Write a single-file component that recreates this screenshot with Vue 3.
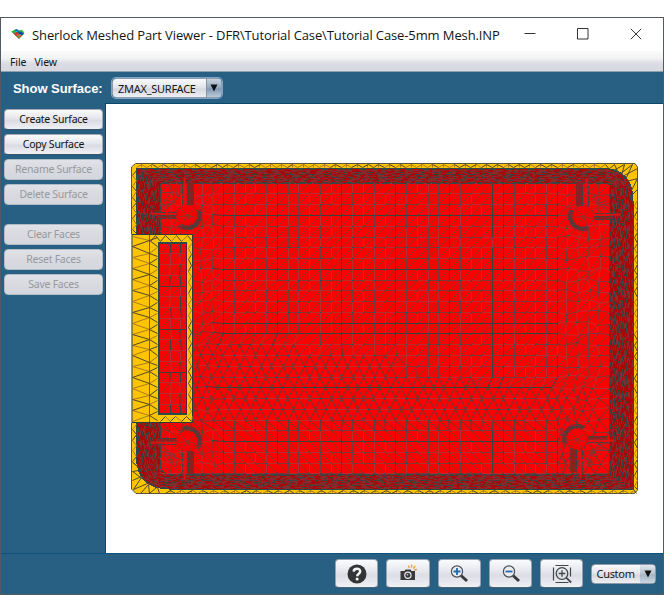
<script setup>
const surfaceActions = [
  { label: 'Create Surface', enabled: true },
  { label: 'Copy Surface', enabled: true },
  { label: 'Rename Surface', enabled: false },
  { label: 'Delete Surface', enabled: false },
]
const faceActions = ['Clear Faces', 'Reset Faces', 'Save Faces']

// Deterministic pseudo random numbers keep the mesh stable between renders.
let seed = 20117
const rnd = () => {
  seed = (seed * 16807) % 2147483647
  return seed / 2147483647
}
const jit = (a) => (rnd() - 0.5) * 2 * a
const f = (n) => n.toFixed(1)
// Line ends sit on pixel centres so that straight edges stay sharp.
const c = (n) => Math.floor(n) + 0.5
const seg = (a, b) => `M${c(a[0])} ${c(a[1])}L${c(b[0])} ${c(b[1])}`
const dot = (p) => `M${Math.floor(p[0])} ${Math.floor(p[1])}h1v1h-1z`

// ---- Floor of the case: 5 mm triangulated grid ----
const floor = { light: '', mid: '', diag: '', steep: '', dark: '', dots: '' }
const cols = [160, 170.5, 181, 191.5, 202]
for (let k = 0; k < 33; k++) cols.push(212.7 + k * 10.77)
cols.push(567, 578, 588.5, 599, 609.5)
const rowCount = 28
const rowY = (j) => 183.2 + j * 10.77
const darkRows = [3, 8, 13, 14, 19, 24]
const darkCols = [6, 11, 17, 22, 27, 31, 32, 37]

function zone(x, y) {
  if (y > 423 && x < 560) return 'C'
  const limit = x < 300 ? 342 : x < 400 ? 350 : x < 480 ? 368 : 386
  return y > limit ? 'B' : 'A'
}
const nodes = []
for (let j = 0; j < rowCount; j++) {
  nodes.push(cols.map((x, i) => {
    const y = rowY(j)
    const edge = i === 0 || i === cols.length - 1
    const loose = i < 6 || i > 37
    const z = zone(x, y)
    let nx = x
    let ny = y
    if (!edge && z === 'B' && j % 2) nx -= 5.4
    if (!edge && loose) nx += jit(1.6)
    else if (z === 'B') nx += jit(0.7)
    if (j > 0 && j < rowCount - 1 && loose) ny += jit(2.4)
    return [nx, ny]
  }))
}
for (let j = 0; j < rowCount; j++) {
  for (let i = 0; i < cols.length; i++) {
    const p = nodes[j][i]
    const z = zone(cols[i], rowY(j))
    const core = i > 4 && i < 37
    if (rnd() < 0.75) floor.dots += dot(p)
    if (i + 1 < cols.length) {
      const s = seg(p, nodes[j][i + 1])
      if (darkRows.includes(j) && core) floor.dark += s
      else if (rnd() < 0.45) floor.mid += s
      else floor.light += s
    }
    if (j + 1 < rowCount) {
      const s = seg(p, nodes[j + 1][i])
      if (z !== 'B' && darkCols.includes(i) && rnd() < 0.94) floor.dark += s
      else if (z === 'B') floor.steep += s
      else if (rnd() < 0.45) floor.mid += s
      else floor.light += s
      if ((z === 'B' && j % 2 === 0) || z === 'C') {
        if (i + 1 < cols.length) floor[z === 'B' ? 'steep' : 'diag'] += seg(p, nodes[j + 1][i + 1])
      } else if (i > 0) floor[z === 'B' ? 'steep' : 'diag'] += seg(p, nodes[j + 1][i - 1])
    }
  }
}

// ---- Side walls: dense contours between the rim and the floor ----
const mix = (a, b, t) => a + (b - a) * t
function contour(t) {
  const l = mix(136.5, 160, t), r = mix(633, 609.5, t)
  const u = mix(168, 183.3, t), b = mix(489, 474.6, t)
  const tr = mix(33, 3, t), bl = mix(33, 12, t)
  return `M${f(l)} ${f(u)}H${f(r - tr)}Q${f(r)} ${f(u)} ${f(r)} ${f(u + tr)}V${f(b)}H${f(l + bl)}Q${f(l)} ${f(b)} ${f(l)} ${f(b - bl)}Z`
}
const wallOuter = contour(0)
const floorOutline = contour(1)
const contours = []
for (let k = 0; k <= 23; k++) {
  const dash = Array.from({ length: 14 }, () => Math.round(2 + rnd() * 8)).join(' ')
  const color = ['#8a2a2a', '#7c2c2c', '#3a4242', '#8f2828'][k % 4]
  contours.push({ d: contour(k / 23), dash, color, offset: Math.round(rnd() * 30) })
}
let wallCross = ''
for (let x = 140; x < 630; x += 5) {
  for (const [a, b] of [[170, 183], [475, 488]]) {
    if ((x > 600 && a < 200) || (x < 168 && a > 400)) continue
    const y = mix(a, b - 3, rnd())
    wallCross += seg([x, y], [x + jit(5), y + 3])
  }
}
for (let y = 186; y < 474; y += 3) {
  for (const [a, b] of [[139, 158], [611, 631]]) {
    if (y > 450 && a < 200) continue
    const x = mix(a, b - 3, rnd())
    wallCross += seg([x, y], [x + 3, y + jit(5)])
  }
}

// ---- Yellow rim and connector cut-out ----
const rim = { dark: '', light: '' }
function strip(x0, y0, x1, y1, horizontal, step) {
  const start = horizontal ? x0 : y0
  const end = horizontal ? x1 : y1
  let side = 0
  for (let v = start; v < end; v += step) {
    const n = Math.min(v + step, end)
    const a = horizontal ? [v, side ? y0 : y1] : [side ? x0 : x1, v]
    const b = horizontal ? [n, side ? y1 : y0] : [side ? x1 : x0, n]
    if (rnd() < 0.5) rim.dark += seg(a, b)
    else rim.light += seg(a, b)
    side = 1 - side
  }
}
strip(136, 164, 605, 167, true, 5.4)
strip(165, 490, 636, 493, true, 5.4)
strip(132, 170, 136, 233, false, 5.4)
strip(132, 424, 136, 465, false, 5.4)
strip(634, 200, 637, 489, false, 5.4)
for (let x = 141; x < 600; x += 10.8) rim.light += seg([x, 164], [x, 167])
for (let x = 170; x < 636; x += 10.8) rim.light += seg([x, 490], [x, 492])
strip(150, 235, 192, 241, true, 5.3)
strip(160, 416, 192, 421, true, 5.3)
strip(188, 243, 191, 415, false, 5.6)
for (let k = 0; k < 17; k++) {
  const y = 236 + k * 10.9
  const m = y + 5.5 + jit(1)
  rim[k % 2 ? 'dark' : 'light'] += seg([132, y], [149, m])
  rim[k % 3 ? 'light' : 'dark'] += seg([132, y + 10.9], [149, m])
  rim.dark += seg([149, m], [157, y + 10])
  rim[k % 2 ? 'light' : 'dark'] += seg([149, m], [157, y + 1])
}
for (const [a, b] of [
  [[605, 164], [609, 169]], [[614, 164], [608, 169]], [[614, 164], [618, 173]], [[624, 164], [613, 170]],
  [[624, 164], [621, 175]], [[632, 164], [619, 174]], [[637, 168], [622, 176]], [[637, 178], [626, 181]],
  [[632, 164], [625, 179]], [[637, 178], [631, 190]], [[637, 189], [632, 194]],
  [[132, 462], [137, 466]], [[132, 471], [138, 470]], [[132, 471], [143, 479]], [[132, 480], [141, 476]],
  [[133, 489], [141, 477]], [[133, 489], [147, 483]], [[140, 493], [148, 484]], [[149, 493], [148, 484]],
  [[149, 493], [156, 487]], [[159, 493], [157, 487]],
]) rim.dark += seg(a, b)

const slot = { light: '', dark: '', diag: '' }
for (let k = 0; k < 16; k++) {
  const y = 243 + k * 10.75
  const w = 170.5 + jit(1)
  slot[k % 4 ? 'light' : 'dark'] += seg([160, y], [185, y])
  slot.diag += seg([170.5, y], [160, y + 10.7]) + seg([180.5, y], [170.5, y + 10.7])
  slot.diag += seg([185, y + 3], [180, y + 10])
  slot[k % 3 ? 'light' : 'dark'] += seg([170.5, y], [w, y + 10.7])
  slot[k % 3 === 1 ? 'light' : 'dark'] += seg([180.5, y], [180.5 + jit(1), y + 10.7])
}

// ---- Screw posts; sx and sy point to the nearest corner of the case ----
function makePost(cx, cy, sx, sy) {
  let shade = ''
  const toward = Math.atan2(-sy, -sx)
  for (let k = 0; k < 15; k++) {
    const a = toward + ((k - 7) / 7) * 1.15
    const b = a + 0.25
    shade += `M${f(cx + 11 * Math.cos(a))} ${f(cy + 11 * Math.sin(a))}L${f(cx + 15 * Math.cos(b))} ${f(cy + 15 * Math.sin(b))}`
  }
  let fan = ''
  for (let k = 0; k < 7; k++) {
    const a = (k * Math.PI * 2) / 7 + 0.3
    fan += seg([cx, cy], [cx + 9 * Math.cos(a), cy + 9 * Math.sin(a)])
    const t = Math.atan2(sy, sx) + (k - 3) * 0.22
    fan += seg([cx + sx * 13, cy + sy * 13], [cx + 29 * Math.cos(t), cy + 29 * Math.sin(t)])
  }
  // Ribs run from the post to both walls; their inner faces are in shadow.
  const ribs = [
    { x: Math.min(cx, cx - 7 * sx), y: sy < 0 ? cy - 33 : cy + 10, w: 7, h: 23 },
    { x: sx < 0 ? cx - 30 : cx + 11, y: Math.min(cy, cy - 3 * sy), w: 19, h: 3.5 },
  ]
  let ribLines = ''
  for (const o of [1, 4, 6]) ribLines += seg([cx - o * sx, cy + sy * 10], [cx - o * sx, cy + sy * 33])
  for (const o of [0, 3]) ribLines += seg([cx + sx * 11, cy - o * sy], [cx + sx * 30, cy - o * sy])
  const tops = seg([cx + 3 * sx, cy + sy * 11], [cx + 3 * sx, cy + sy * 38]) + seg([cx + sx * 11, cy + 1.5 * sy], [cx + sx * 37, cy + 1.5 * sy])
  const topEdges = seg([cx + 5 * sx, cy + sy * 11], [cx + 5 * sx, cy + sy * 35]) + seg([cx + sx * 11, cy + 3 * sy], [cx + sx * 34, cy + 3 * sy])
  const a0 = toward - 1.2
  const a1 = toward + 1.2
  const arc = `M${f(cx + 13 * Math.cos(a0))} ${f(cy + 13 * Math.sin(a0))}A13 13 0 0 1 ${f(cx + 13 * Math.cos(a1))} ${f(cy + 13 * Math.sin(a1))}`
  return { cx, cy, shade, fan, ribs, ribLines, tops, topEdges, arc }
}
const posts = [
  makePost(187, 215, -1, -1),
  makePost(583, 216, 1, -1),
  makePost(187, 441, -1, 1),
  makePost(577, 439, 1, 1),
]
</script>

<template>
  <div class="page">
    <div class="window">
      <header class="titlebar">
        <svg class="app-icon" width="16" height="13" viewBox="0 0 16 13">
          <path d="M1 4l5-3 9 5-6 6z" fill="#238547" />
          <path d="M1 4l4-2 2 2-3 2z" fill="#15c51c" />
          <path d="M6 1l4 2-2 2-3-2z" fill="#1464ce" />
          <path d="M9 3l3-1 3 3-3 1z" fill="#20ba37" />
          <path d="M3 5l3-1 3 3-3 2z" fill="#dd3424" />
          <path d="M8 5l3-1 3 2-3 2z" fill="#133cbb" />
          <path d="M6 8l3-2 3 2-3 3z" fill="#e05b20" />
          <path d="M4 5l4-2M8 9l3-2" stroke="#21bfc7" />
        </svg>
        <h1 class="title">Sherlock Meshed Part Viewer - DFR\Tutorial Case\Tutorial Case-5mm Mesh.INP</h1>
        <div class="controls">
          <svg width="12" height="12" viewBox="0 0 12 12"><path d="M.5 5.5h11" /></svg>
          <svg width="12" height="12" viewBox="0 0 12 12"><path d="M.5 .5h10.5v10.5H.5z" /></svg>
          <svg width="12" height="12" viewBox="0 0 12 12"><path d="M.8 .8l10.4 10.4M11.2 .8L.8 11.2" /></svg>
        </div>
      </header>

      <nav class="menu"><span>File</span><span>View</span></nav>

      <div class="surface-bar">
        <span class="surface-label">Show Surface:</span>
        <div class="combo focused">
          <span class="combo-text">ZMAX_SURFACE</span>
          <span class="combo-arrow"><svg width="8" height="8" viewBox="0 0 8 8"><path d="M.5 .5h7L4 7.5z" /></svg></span>
        </div>
      </div>

      <div class="body">
        <aside class="sidebar">
          <div class="group">
            <button v-for="a in surfaceActions" :key="a.label" class="action" :disabled="!a.enabled">{{ a.label }}</button>
          </div>
          <div class="group">
            <button v-for="a in faceActions" :key="a" class="action" disabled>{{ a }}</button>
          </div>
        </aside>

        <main class="canvas">
          <svg class="mesh" width="510" height="334" viewBox="130 162 510 334">
            <path class="rim" d="M135.500 163.500H635L637.500 167V490L634.500 493.500H136L131.500 489V167Z" />
            <path class="wall" :d="wallOuter" />
            <path class="floor" :d="floorOutline" />
            <g class="lines">
              <path class="l-diag" :d="floor.diag" />
              <path class="l-steep" :d="floor.steep" />
              <path class="l-light" :d="floor.light" />
              <path class="l-mid" :d="floor.mid" />
              <path class="l-dark" :d="floor.dark" />
              <path class="dots" :d="floor.dots" />
            </g>
            <g class="lines crisp">
              <path
                v-for="(k, i) in contours"
                :key="i"
                :d="k.d"
                :stroke="k.color"
                :stroke-dasharray="k.dash"
                :stroke-dashoffset="k.offset"
              />
              <path class="l-wall" :d="wallCross" />
              <path class="l-edge" :d="wallOuter" />
              <path class="l-inner" :d="floorOutline" />
            </g>
            <g v-for="(p, i) in posts" :key="'p' + i" class="lines">
              <rect v-for="(r, n) in p.ribs" :key="n" class="rib" :x="r.x" :y="r.y" :width="r.w" :height="r.h" />
              <path class="rib-lines" :d="p.ribLines" />
              <path class="rib-top" :d="p.tops" />
              <path class="rib-lines" :d="p.topEdges" />
              <path class="crescent" :d="p.arc" />
              <path class="shade" :d="p.shade" />
              <circle class="post" :cx="p.cx" :cy="p.cy" r="10.500" />
              <path class="fan" :d="p.fan" />
            </g>
            <g class="lines">
              <path class="bracket" d="M132 234.500H192.500V422.500H132Z" />
              <path class="edge-blue" d="M131.500 234V423" />
              <path class="floor slot" d="M159 242.500H187V414.500H159Z" />
              <path class="l-diag" :d="slot.diag" />
              <path class="l-light" :d="slot.light" />
              <path class="l-dark" :d="slot.dark" />
              <path class="slot-edge" d="M159 242V415M158 243H187M158 414H187" />
              <path class="slot-right" d="M186.500 244V414" />
              <path class="rim-light" :d="rim.light" />
              <path class="bracket-mid" d="M149.500 235V422" />
              <path class="rim-dark" :d="rim.dark" />
            </g>
          </svg>
        </main>
      </div>

      <footer class="toolbar">
        <button class="tool" aria-label="Help">
          <svg width="20" height="20" viewBox="0 0 20 20">
            <circle cx="10" cy="10" r="9.500" fill="#333436" />
            <path d="M6.700 7.600C6.800 3.600 13.400 3.700 13.200 7.500C13.100 9.800 10.200 9.700 10.200 12.200" fill="none" stroke="#f2f3f6" stroke-width="2.500" />
            <circle cx="10.100" cy="15" r="1.500" fill="#f2f3f6" />
          </svg>
        </button>
        <button class="tool" aria-label="Snapshot">
          <svg width="20" height="20" viewBox="0 0 20 20">
            <path d="M2.500 7h4l1-1.500h5l1 1.500H17v9H2.500z" fill="#39393b" />
            <circle cx="9.900" cy="11.300" r="3.700" fill="#e8e9ee" />
            <circle cx="9.900" cy="11.300" r="2.500" fill="#39393b" />
            <circle cx="9.500" cy="10.800" r=".8" fill="#dddddf" />
            <path d="M11.300 4L10.300 1.500M13.600 3.500V.5M15.300 4.500l2-2.700M16 6l3-.5" stroke="#e3a04a" stroke-width="1.300" fill="none" />
          </svg>
        </button>
        <button class="tool" aria-label="Zoom in">
          <svg width="20" height="20" viewBox="0 0 20 20">
            <path d="M12 11.500l6 5.500" stroke="#39393b" stroke-width="3" />
            <circle cx="8" cy="7.500" r="5.600" fill="#e9edf2" stroke="#4c5053" stroke-width="1.200" />
            <path d="M4.500 7.500h7M8 4v7" stroke="#2467ad" stroke-width="1.800" />
          </svg>
        </button>
        <button class="tool" aria-label="Zoom out">
          <svg width="20" height="20" viewBox="0 0 20 20">
            <path d="M12 11.500l6 5.500" stroke="#39393b" stroke-width="3" />
            <circle cx="8" cy="7.500" r="5.600" fill="#e9edf2" stroke="#4c5053" stroke-width="1.200" />
            <path d="M4.500 7.500h7" stroke="#2467ad" stroke-width="1.800" />
          </svg>
        </button>
        <button class="tool" aria-label="Zoom to fit">
          <svg width="20" height="20" viewBox="0 0 20 20" fill="none" stroke="#44474a">
            <path d="M3.500 1.500h13M3.500 18.500h13M1.500 3.500v13M18.500 3.500v9" stroke-width="1.200" />
            <circle cx="10" cy="9.500" r="5.800" stroke-width="1.300" />
            <path d="M6.700 9.500h6.600M10 6.200v6.600" stroke-width="1.300" />
            <path d="M14.200 13.700l5 4.800" stroke-width="1.800" />
          </svg>
        </button>
        <div class="combo small">
          <span class="combo-text">Custom</span>
          <span class="combo-arrow"><svg width="8" height="8" viewBox="0 0 8 8"><path d="M.5 .5h7L4 7.500z" /></svg></span>
        </div>
      </footer>
    </div>
  </div>
</template>

<style>
body { margin: 0; background: #fff; overflow: hidden; }
</style>

<style scoped>
* { box-sizing: border-box; }
.page {
  width: 664px;
  height: 595px;
  padding-top: 17px;
  background: #fff;
  font-family: "Noto Sans", "Open Sans", sans-serif;
  color: #151515;
}
.window {
  height: 578px;
  border: 1px solid #535a60;
  background: #286084;
  display: flex;
  flex-direction: column;
}
.titlebar {
  height: 33px;
  background: #fff;
  display: flex;
  align-items: center;
  padding-left: 9px;
  flex: none;
}
.app-icon { margin-right: 6px; padding-bottom: 1px; }
.title {
  margin: 0;
  width: 467px;
  font: 400 13px/20px "Open Sans", sans-serif;
  white-space: nowrap;
  letter-spacing: -0.11px;
}
.controls { display: flex; gap: 41px; margin-left: 25px; padding-bottom: 1px; }
.controls svg { display: block; fill: none; stroke: #333; }
.menu {
  height: 21px;
  flex: none;
  display: flex;
  gap: 8px;
  padding-left: 9px;
  font-size: 10.500px;
  line-height: 22px;
  letter-spacing: -0.1px;
  background: linear-gradient(#fbfbfc, #f4f4f6 35%, #d9dae2 65%, #d7d8e0);
  border-bottom: 1px solid #8b9fae;
}
.surface-bar {
  height: 32px;
  flex: none;
  display: flex;
  align-items: center;
  padding-left: 12px;
}
.surface-label {
  width: 99px;
  font: bold 13px "Liberation Sans", sans-serif;
  color: #fff;
  white-space: nowrap;
  letter-spacing: -0.05px;
}
.combo {
  display: flex;
  width: 110px;
  height: 20px;
  border-radius: 4px;
  overflow: hidden;
  border: 1px solid #8f9ba9;
  background: linear-gradient(#fafbfc, #e2e3e9 50%, #d5d7df 55%, #eeeff3);
  font-size: 11px;
  line-height: 19px;
}
.combo.focused { box-shadow: 0 0 0 1px #7ba5cc; }
.combo-text { flex: 1; padding-left: 5px; letter-spacing: -0.27px; }
.combo-arrow {
  width: 15px;
  display: flex;
  align-items: center;
  justify-content: center;
  background: linear-gradient(#c9d3de, #90a6bc 50%, #819ab2 55%, #b8cbdc);
  border-left: 1px solid #8396a8;
}
.combo-arrow svg { fill: #111; }
.combo.small { width: 65px; height: 20px; line-height: 18px; }
.small .combo-text { padding-left: 4px; letter-spacing: -0.3px; }
.small .combo-arrow { background: linear-gradient(#e3e8ed, #b5c2cf 50%, #a8b7c6 55%, #cad6e1); border-left: 0; }
.body { flex: 1; display: flex; min-height: 0; }
.sidebar {
  width: 104px;
  padding: 5px 0 0 3px;
  display: flex;
  flex-direction: column;
  gap: 19px;
}
.group { display: flex; flex-direction: column; gap: 4px; }
.action {
  width: 99px;
  height: 21px;
  padding: 0 0 1px;
  border: 1px solid #a4a9b3;
  border-bottom-color: #39536a;
  border-radius: 4px;
  background: linear-gradient(#fbfbfc, #e5e6eb 45%, #dadce3 55%, #f0f1f5);
  font: 10.500px/18px "Noto Sans", sans-serif;
  color: #111;
  letter-spacing: -0.25px;
}
.action:disabled {
  color: #96999f;
  border-color: #b3bbc5;
  background: linear-gradient(#e0e2e7, #d8dae0 50%, #d5d7de);
}
.canvas {
  flex: 1;
  background: #fff;
  border-left: 1px solid #0b486e;
  border-top: 1px solid #0b486e;
  padding: 58px 0 0 24px;
  margin-top: -1px;
}
.mesh { display: block; }
.toolbar {
  height: 41px;
  flex: none;
  display: flex;
  align-items: center;
  padding: 0 0 1px 334px;
  gap: 8px;
  border-top: 1px solid #0c527d;
}
.tool {
  width: 43.300px;
  height: 29px;
  padding: 0;
  border: 1px solid #98a2ae;
  border-bottom-color: #4b6074;
  border-radius: 4px;
  background: linear-gradient(#fafbfc, #e5e6ec 45%, #dbdde4 55%, #f0f1f5);
  display: flex;
  align-items: center;
  justify-content: center;
}
.rim { fill: #ffc400; stroke: #595340; stroke-width: 1; }
.wall { fill: #a80808; }
.floor { fill: #f00; }
.lines { fill: none; stroke-width: 1; }
.crisp { shape-rendering: crispEdges; }
.l-diag { stroke: #8a3535; }
.l-steep { stroke: #673838; }
.l-light { stroke: #b43030; }
.l-mid { stroke: #7e3737; }
.l-dark { stroke: #3e4040; }
.dots { fill: #1f4848; }
.l-wall { stroke: #4f3434; }
.l-edge { stroke: #2d4848; }
.l-inner { stroke: #3a4444; stroke-dasharray: 9 2 5 1; }
.rib { fill: #8a2222; }
.rib-lines { stroke: #3b4242; stroke-dasharray: 5 1 3 2; }
.rib-top { stroke: #e01010; stroke-width: 2; }
.crescent { stroke: #8e2828; stroke-width: 4.500; }
.shade { stroke: #354444; }
.post { fill: #f80000; stroke: #6d3535; stroke-dasharray: 2 2; }
.fan { stroke: #8b3333; }
.bracket { fill: #ffc400; stroke: #2e3a3a; }
.edge-blue { stroke: #89939c; }
.slot-edge { stroke: #2d4848; stroke-width: 2; }
.slot-right { stroke: #6a1540; }
.bracket-mid { stroke: #6c6235; }
.rim-light { stroke: #a87c25; }
.rim-dark { stroke: #4b4a30; }
</style>
